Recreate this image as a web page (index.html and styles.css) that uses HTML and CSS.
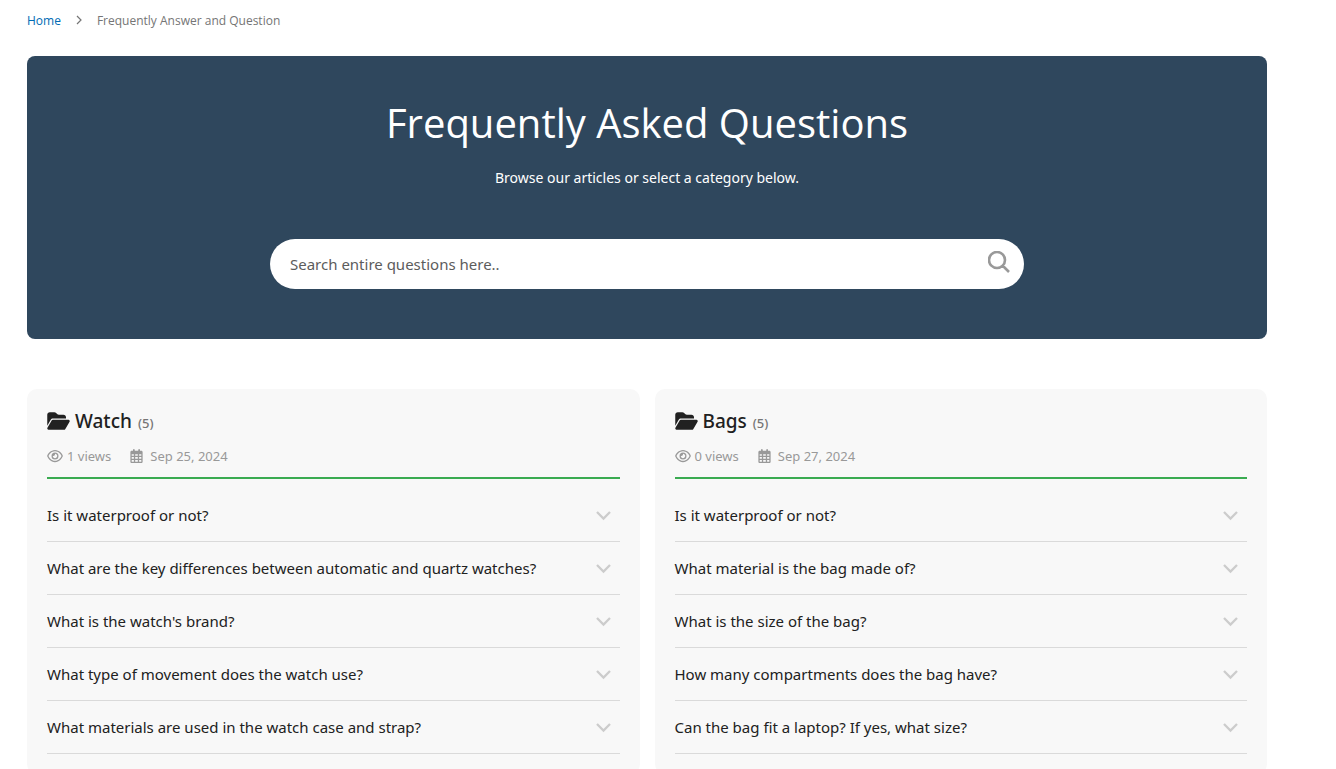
FILE: index.html
```html
<!DOCTYPE html>
<html lang="en">
<head>
    <meta charset="UTF-8">
    <meta name="viewport" content="width=device-width, initial-scale=1.0">
    <title>Frequently Answer and Question</title>
    <link rel="stylesheet" href="styles.css">
</head>
<body>
    <!-- shared icons -->
    <svg class="icon-defs" aria-hidden="true">
        <symbol id="icon-folder" viewBox="0 0 576 512">
            <path d="M88.700 223.800L0 375.800V96C0 60.700 28.700 32 64 32H181.500c17 0 33.300 6.700 45.300 18.700l26.500 26.500c12 12 28.300 18.700 45.300 18.700H416c35.300 0 64 28.700 64 64v32H144c-22.800 0-43.800 12.100-55.300 31.800zm27.600 16.100C122.100 230 132.600 224 144 224H544c11.500 0 22 6.100 27.700 16.100s5.700 22.200-.1 32.100l-112 192C453.900 474 443.400 480 432 480H32c-11.500 0-22-6.100-27.700-16.100s-5.700-22.200 .1-32.100l112-192z"/>
        </symbol>
        <symbol id="icon-eye" viewBox="0 0 576 512">
            <path d="M288 80c-65.200 0-118.800 29.600-159.900 67.700C89.600 183.500 63 226 49.400 256c13.600 30 40.200 72.500 78.600 108.300C169.200 402.400 222.800 432 288 432s118.800-29.600 159.900-67.700C486.400 328.500 513 286 526.600 256c-13.600-30-40.200-72.500-78.600-108.300C406.800 109.600 353.200 80 288 80zM95.400 112.600C142.500 68.800 207.200 32 288 32s145.500 36.800 192.600 80.600c46.800 43.500 78.100 95.400 93 131.100c3.300 7.900 3.300 16.700 0 24.600c-14.900 35.700-46.200 87.700-93 131.100C433.500 443.200 368.800 480 288 480s-145.500-36.800-192.600-80.600C48.600 356 17.300 304 2.500 268.300c-3.300-7.900-3.300-16.700 0-24.600C17.300 208 48.600 156 95.400 112.600zM288 336c44.200 0 80-35.800 80-80s-35.800-80-80-80c-.7 0-1.300 0-2 0c1.300 5.100 2 10.500 2 16c0 35.300-28.700 64-64 64c-5.500 0-10.900-.7-16-2c0 .7 0 1.300 0 2c0 44.200 35.800 80 80 80zm0-208a128 128 0 1 1 0 256 128 128 0 1 1 0-256z"/>
        </symbol>
        <symbol id="icon-calendar" viewBox="0 0 448 512">
            <path fill-rule="evenodd" d="M128 0c17.700 0 32 14.300 32 32V64H288V32c0-17.700 14.300-32 32-32s32 14.300 32 32V64h48c26.500 0 48 21.500 48 48v48H0V112C0 85.500 21.500 64 48 64H96V32c0-17.700 14.300-32 32-32zM0 160H448V464c0 26.500-21.500 48-48 48H48c-26.500 0-48-21.500-48-48ZM48 192v56h80v-56zM176 192v56h96v-56zM320 192v56h80v-56zM48 296v56h80v-56zM176 296v56h96v-56zM320 296v56h80v-56zM48 400v64h80v-64zM176 400v64h96v-64zM320 400v64h80v-64z"/>
        </symbol>
        <symbol id="icon-down" viewBox="0 0 16 16">
            <path d="M1 5L7.500 11.500L14 5" fill="none" stroke="currentColor" stroke-width="2.300"/>
        </symbol>
        <symbol id="icon-search" viewBox="0 0 22 22">
            <path d="M14.500 14.500L21 21M17 9A8 8 0 1 1 1 9A8 8 0 1 1 17 9Z" fill="none" stroke="currentColor" stroke-width="2.600"/>
        </symbol>
        <symbol id="icon-next" viewBox="0 0 8 10">
            <path d="M2 1L6 5L2 9" fill="none" stroke="currentColor" stroke-width="1.200"/>
        </symbol>
    </svg>

    <div class="page">
        <nav class="breadcrumbs" aria-label="Breadcrumb">
            <a href="#">Home</a>
            <svg class="next-icon"><use href="#icon-next"/></svg>
            <span>Frequently Answer and Question</span>
        </nav>

        <header class="banner">
            <h1>Frequently Asked Questions</h1>
            <p>Browse our articles or select a category below.</p>
            <form class="search" role="search">
                <input type="text" placeholder="Search entire questions here.." aria-label="Search entire questions">
                <button type="submit" aria-label="Search"><svg><use href="#icon-search"/></svg></button>
            </form>
        </header>

        <main class="categories">
            <section class="category">
                <h2><svg class="folder-icon"><use href="#icon-folder"/></svg>Watch <small>(5)</small></h2>
                <div class="meta">
                    <span class="views"><svg class="eye-icon"><use href="#icon-eye"/></svg>1 views</span>
                    <span class="date"><svg class="calendar-icon"><use href="#icon-calendar"/></svg>Sep 25, 2024</span>
                </div>
                <ul class="questions">
                    <li><button type="button">Is it waterproof or not?<svg><use href="#icon-down"/></svg></button></li>
                    <li><button type="button">What are the key differences between automatic and quartz watches?<svg><use href="#icon-down"/></svg></button></li>
                    <li><button type="button">What is the watch's brand?<svg><use href="#icon-down"/></svg></button></li>
                    <li><button type="button">What type of movement does the watch use?<svg><use href="#icon-down"/></svg></button></li>
                    <li><button type="button">What materials are used in the watch case and strap?<svg><use href="#icon-down"/></svg></button></li>
                </ul>
            </section>

            <section class="category">
                <h2><svg class="folder-icon"><use href="#icon-folder"/></svg>Bags <small>(5)</small></h2>
                <div class="meta">
                    <span class="views"><svg class="eye-icon"><use href="#icon-eye"/></svg>0 views</span>
                    <span class="date"><svg class="calendar-icon"><use href="#icon-calendar"/></svg>Sep 27, 2024</span>
                </div>
                <ul class="questions">
                    <li><button type="button">Is it waterproof or not?<svg><use href="#icon-down"/></svg></button></li>
                    <li><button type="button">What material is the bag made of?<svg><use href="#icon-down"/></svg></button></li>
                    <li><button type="button">What is the size of the bag?<svg><use href="#icon-down"/></svg></button></li>
                    <li><button type="button">How many compartments does the bag have?<svg><use href="#icon-down"/></svg></button></li>
                    <li><button type="button">Can the bag fit a laptop? If yes, what size?<svg><use href="#icon-down"/></svg></button></li>
                </ul>
            </section>
        </main>
    </div>
</body>
</html>
```
FILE: styles.css
```css
* {
    margin: 0;
    padding: 0;
    box-sizing: border-box;
}
body {
    background-color: #fff;
    color: #212121;
    font-family: "Segoe UI", "Noto Sans", "Open Sans", sans-serif;
    font-size: 15px;
}
button, input {
    font: inherit;
    color: inherit;
    border: none;
    background: none;
}
button {
    cursor: pointer;
}
svg {
    flex-shrink: 0;
    fill: currentColor;
}
.icon-defs {
    display: none;
}
.page {
    padding: 0 69px 0 27px;
}
.breadcrumbs {
    display: flex;
    align-items: center;
    height: 40px;
    margin-bottom: 16px;
    font-family: "Open Sans", sans-serif;
    font-size: 12px;
    color: #757575;
}
.breadcrumbs a {
    color: #006bb4;
    text-decoration: none;
}
.next-icon {
    width: 8px;
    height: 10px;
    margin: 0 14px;
}
.banner {
    display: flex;
    flex-direction: column;
    align-items: center;
    padding: 40px 20px 50px;
    background-color: #2f475d;
    border-radius: 8px;
    color: #fff;
    text-align: center;
}
.banner h1 {
    font-family: "Segoe UI", "Open Sans", sans-serif;
    font-size: 40px;
    font-weight: 400;
    line-height: 54px;
}
.banner p {
    margin: 16px 0 50px;
    font-size: 14px;
    line-height: 23px;
}
.search {
    display: flex;
    align-items: center;
    width: 64%;
    max-width: 754px;
    height: 50px;
    padding: 0 14px 0 20px;
    background-color: #fff;
    border-radius: 25px;
    color: #555;
}
.search input {
    flex: 1;
    min-width: 0;
    height: 50px;
    outline: none;
}
.search input::placeholder {
    color: #5c5c5c;
    opacity: 1;
}
.search button {
    padding-bottom: 4px;
    color: #999;
}
.search svg {
    display: block;
    width: 22px;
    height: 22px;
}
.categories {
    display: grid;
    grid-template-columns: 1fr 1fr;
    gap: 15px;
    margin-top: 50px;
}
.category {
    padding: 20px;
    background-color: #f8f8f8;
    border-radius: 10px;
}
.category h2 {
    display: flex;
    align-items: center;
    height: 24px;
    font-size: 19px;
    font-weight: 500;
}
.category small {
    margin: 3px 0 0 6px;
    font-size: 13px;
    color: #757575;
}
.folder-icon {
    width: 23px;
    height: 20px;
    margin-right: 5px;
}
.meta {
    display: flex;
    align-items: center;
    gap: 19px;
    height: 46px;
    padding-top: 2px;
    border-bottom: 2px solid #3aab51;
    font-size: 13px;
    color: #999;
}
.meta span {
    display: flex;
    align-items: center;
}
.eye-icon {
    width: 16px;
    height: 14px;
    margin-right: 4px;
}
.calendar-icon {
    width: 13px;
    height: 14px;
    margin-right: 7px;
}
.questions {
    margin-top: 10px;
    list-style: none;
}
.questions li {
    border-bottom: 1px solid #dadada;
}
.questions button {
    display: flex;
    align-items: center;
    justify-content: space-between;
    width: 100%;
    min-height: 52px;
    padding-right: 8px;
    text-align: left;
}
.questions svg {
    width: 16px;
    height: 16px;
    color: #ccc;
}
```
